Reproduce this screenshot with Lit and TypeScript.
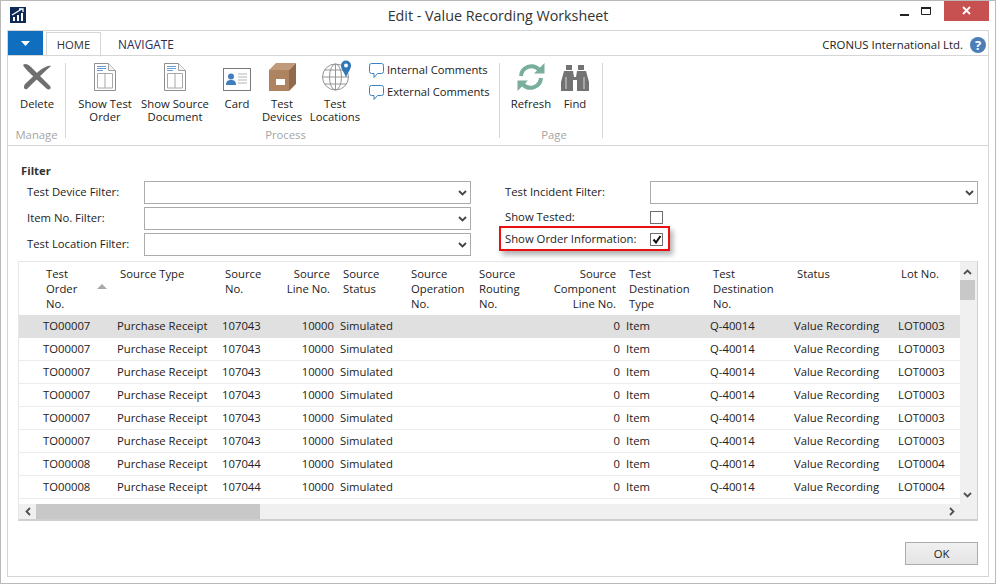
import { LitElement, html, css, svg } from "lit";
import { customElement } from "lit/decorators.js";

const chevron = html`<svg class="chev" width="9" height="6" viewBox="0 0 9 6"><path d="M1 1l3.5 3.5L8 1" fill="none" stroke="#444" stroke-width="1.8"/></svg>`;

const docIcon = html`<svg width="22" height="28" viewBox="0 0 22 28">
  <path d="M.5.5h14l7 7v20H.5z" fill="#fff" stroke="#8f8f8f"/>
  <path d="M14.5.5v7h7" fill="#f2f2f2" stroke="#a0a0a0"/>
  <path d="M3 3.500h9M3 5.500h9M3 7.500h6" stroke="#6b9bd0"/>
  <path d="M3.500 10.500h15v14.500h-15zM11 10.500v14.500" fill="none" stroke="#a8a8a8"/>
</svg>`;

const commentIcon = html`<svg width="15" height="16" viewBox="0 0 15 16">
  <path d="M2.500.5h10a2 2 0 0 1 2 2v6a2 2 0 0 1-2 2H8.500l-3.500 4v-4H2.500a2 2 0 0 1-2-2v-6a2 2 0 0 1 2-2z" fill="#fff" stroke="#3b80c2"/>
</svg>`;

const icons = {
  del: html`<svg width="30" height="28" viewBox="0 0 30 28" fill="#6f6f6f">
    <path d="M1 2C3 0 6 1 9 4l19 19c2 3-1 4-3 3L13 15C8 10 3 6 1 2z"/>
    <path d="M29 3c-2-1-7 1-12 5L3 21c-2 3-1 6 2 5C10 21 20 11 29 3z"/>
  </svg>`,
  card: html`<svg width="28" height="23" viewBox="0 0 28 23">
    <rect x=".5" y=".5" width="27" height="22" fill="#fff" stroke="#7a7a7a"/>
    <circle cx="8" cy="8.500" r="3" fill="#3f7fc1"/>
    <path d="M3 17c0-4 2-5 5-5s5 1 5 5z" fill="#3f7fc1"/>
    <path d="M15 6h9M15 9h9M15 12h9M15 15h9" stroke="#b5b5b5"/>
  </svg>`,
  box: html`<svg width="27" height="28" viewBox="0 0 27 28">
    <path d="M0 7l7-7h20l-7 7z" fill="#c09a79"/>
    <path d="M20 7l7-7v21l-7 7z" fill="#8f6a4b"/>
    <rect y="7" width="20" height="21" fill="#ad8360"/>
    <rect x="7" y="16" width="9" height="6" fill="#fff"/>
  </svg>`,
  globe: html`<svg width="30" height="31" viewBox="0 0 30 31" overflow="visible">
    <g fill="none" stroke="#959595">
      <circle cx="15.500" cy="17" r="13"/>
      <ellipse cx="15.500" cy="17" rx="6" ry="13"/>
      <path d="M15.500 4v26M2.500 17h26M4.500 10h22M4.500 24h22"/>
    </g>
    <path d="M26 .5a5 5 0 0 1 5 5c0 4-3.500 7-5 12-1.500-5-5-8-5-12a5 5 0 0 1 5-5z" fill="#2f77b8"/>
    <circle cx="26" cy="5.500" r="2" fill="#fff"/>
  </svg>`,
  refresh: html`<svg width="28" height="28" viewBox="0 0 28 28" fill="none">
    <path d="M4 13a10.500 10.500 0 0 1 18-6.500" stroke="#7aae9c" stroke-width="4"/>
    <path d="M17 10.500h10.500V0z" fill="#7aae9c"/>
    <path d="M24 15a10.500 10.500 0 0 1-18 6.500" stroke="#7aae9c" stroke-width="4"/>
    <path d="M11 17.500H.5V28z" fill="#7aae9c"/>
  </svg>`,
  find: html`<svg width="28" height="26" viewBox="0 0 28 26" fill="#737373">
    <path d="M5 0h6v5H5zM17 0h6v5h-6z"/>
    <path d="M3 6h9l1 6h2l1-6h9l3 11v9H16V15h-4v11H0v-9z"/>
    <path d="M5 12v12M23 12v12" stroke="#a5a5a5" stroke-width="2"/>
  </svg>`,
};

interface Row {
  order: string;
  no: string;
  lot: string;
}

const rows: Row[] = [
  { order: "TO00007", no: "107043", lot: "LOT0003" },
  { order: "TO00007", no: "107043", lot: "LOT0003" },
  { order: "TO00007", no: "107043", lot: "LOT0003" },
  { order: "TO00007", no: "107043", lot: "LOT0003" },
  { order: "TO00007", no: "107043", lot: "LOT0003" },
  { order: "TO00007", no: "107043", lot: "LOT0003" },
  { order: "TO00008", no: "107044", lot: "LOT0004" },
  { order: "TO00008", no: "107044", lot: "LOT0004" },
];

@customElement("app-root")
export class AppRoot extends LitElement {
  static styles = css`
    :host {
      display: block;
      width: 996px;
      height: 584px;
      font-family: "Open Sans", "Noto Sans", sans-serif;
      font-size: 11.3px;
      color: #222;
    }

    .window {
      box-sizing: border-box;
      width: 996px;
      height: 584px;
      border: 1px solid #b9b9b9;
      padding: 0 6px 6px;
      background: #fff;
      display: flex;
      flex-direction: column;
    }

    .titlebar {
      height: 29px;
      display: grid;
      grid-template-columns: 1fr auto 1fr;
      flex: none;
    }

    .logo {
      margin: 6px 0 0 3px;
    }

    .title {
      font-size: 14.3px;
      line-height: 29px;
      color: #333;
    }

    .controls {
      justify-self: end;
      display: flex;
      height: 20px;
    }

    .ctl {
      width: 22px;
      display: flex;
      justify-content: center;
      padding-top: 6px;
      box-sizing: border-box;
    }

    .close {
      width: 45px;
      background: #c75050;
      margin-left: 7px;
      padding-top: 5px;
    }

    .panel {
      flex: 1;
      border: 1px solid #d6d6d6;
      display: flex;
      flex-direction: column;
      min-height: 0;
    }

    .tabs {
      height: 24px;
      flex: none;
      display: flex;
      align-items: stretch;
      border-bottom: 1px solid #d6d6d6;
      position: relative;
    }

    .menu {
      width: 35px;
      height: 24px;
      background: #106ebe;
      display: flex;
      align-items: center;
      justify-content: center;
      margin-bottom: -1px;
    }

    .tab {
      line-height: 26px;
      text-align: center;
      color: #2b2b55;
      font-size: 11.8px;
    }

    .tab.active {
      width: 55px;
      margin-left: 3px;
      box-sizing: border-box;
      border: 1px solid #d6d6d6;
      border-bottom: 1px solid #fff;
      height: 25px;
      color: #333;
      margin-top: 1px;
      line-height: 24px;
      font-size: 11.3px;
    }

    .tab.nav {
      margin-left: 17px;
    }

    .company {
      margin-left: auto;
      display: flex;
      align-items: center;
      gap: 7px;
      padding-right: 2px;
      padding-top: 3px;
      height: 21px;
      font-size: 11.4px;
    }

    .help {
      width: 16px;
      height: 16px;
      border-radius: 50%;
      background: #4a7fb8;
      color: #fff;
      font-weight: 700;
      font-size: 13px;
      line-height: 16px;
      text-align: center;
    }

    .ribbon {
      height: 89px;
      flex: none;
      display: flex;
      border-bottom: 1px solid #d6d6d6;
    }

    .group {
      margin: 7px 0 7px;
      border-right: 1px solid #d6d6d6;
      display: flex;
      flex-direction: column;
      box-sizing: border-box;
    }

    .group.manage {
      width: 58px;
    }

    .group.process {
      width: 434px;
      padding-left: 6px;
    }

    .group.page {
      width: 103px;
      padding-left: 6px;
    }

    .buttons {
      flex: 1;
      display: flex;
    }

    .group-label {
      color: #a6a6a6;
      text-align: center;
      line-height: 14px;
      height: 14px;
      padding-top: 1px;
      margin-bottom: -4px;
    }

    .rbtn {
      display: flex;
      flex-direction: column;
      align-items: center;
      text-align: center;
      line-height: 13px;
    }

    .rbtn .ic {
      height: 32px;
      display: flex;
      align-items: flex-end;
      justify-content: center;
      margin-bottom: 6px;
      margin-top: -4px;
    }

    .w38 { width: 38px; }
    .w40 { width: 40px; }
    .w50 { width: 50px; }
    .w58 { width: 57px; padding-left: 1px; box-sizing: border-box; }
    .w66 { width: 66px; }
    .w74 { width: 74px; }

    .comments {
      display: flex;
      flex-direction: column;
      gap: 6px;
      margin-left: 1px;
    }

    .comment {
      display: flex;
      gap: 3px;
      height: 16px;
      line-height: 14px;
      font-size: 11.2px;
    }

    .filter {
      flex: none;
      padding: 17px 9px 0 13px;
    }

    .filter-title {
      font-weight: 700;
      line-height: 16px;
      height: 18px;
      color: #333;
    }

    .filter-grid {
      display: grid;
      grid-template-columns: 444px 473px;
      column-gap: 34px;
      padding-left: 6px;
    }

    .fcol {
      display: flex;
      flex-direction: column;
      gap: 3px;
    }

    .fcol.right {
      gap: 0;
    }

    .frow {
      height: 23px;
      display: flex;
      align-items: center;
      position: relative;
    }

    .right .frow {
      height: 22px;
    }

    .right .frow.first {
      height: 23px;
      margin-bottom: 2px;
    }

    .frow label {
      flex: none;
      margin-top: -2px;
    }

    .left label {
      width: 117px;
    }

    .right label {
      width: 145px;
    }

    .select {
      flex: 1;
      height: 23px;
      box-sizing: border-box;
      border: 1px solid #ababab;
      background: #fff;
      display: flex;
      align-items: center;
      justify-content: flex-end;
      padding-right: 3px;
    }

    .check {
      width: 13px;
      height: 13px;
      box-sizing: border-box;
      border: 1px solid #6f6f6f;
      background: #fff;
      display: flex;
      align-items: center;
      justify-content: center;
    }

    .highlight {
      position: absolute;
      left: -6px;
      top: -2px;
      width: 171px;
      height: 25px;
      box-sizing: border-box;
      border: 2px solid #e81010;
      box-shadow: 3px 4px 5px rgba(0, 0, 0, 0.3);
      pointer-events: none;
    }

    .table {
      margin-top: 5px;
      width: 960px;
      height: 260px;
      box-sizing: border-box;
      border: 1px solid #e6e6e6;
      border-right-color: #cfcfcf;
      border-bottom: 2px solid #cfcfcf;
      margin-left: 10px;
      display: flex;
      flex-direction: column;
      flex: none;
      background: #fff;
    }

    .table-main {
      flex: 1;
      display: flex;
      min-height: 0;
    }

    .rows {
      width: 942px;
      overflow: hidden;
    }

    .cols {
      display: grid;
      grid-template-columns: 21px 74px 105px 61px 57px 68px 68px 68px 82px 84px 84px 104px 66px;
    }

    .head {
      height: 53px;
      line-height: 15px;
      padding-top: 4px;
      box-sizing: border-box;
      position: relative;
    }

    .head div {
      padding-left: 6px;
    }

    .head .num {
      padding-left: 0;
      padding-right: 7px;
      text-align: right;
    }

    .sort {
      position: absolute;
      left: 78px;
      top: 22px;
    }

    .row {
      height: 23px;
      line-height: 22px;
      box-sizing: border-box;
      border-bottom: 1px solid #ececec;
      white-space: nowrap;
    }

    .row.sel {
      background: #e0e0e0;
      border-bottom-color: #e0e0e0;
    }

    .row div {
      padding-left: 3px;
    }

    .row .num {
      padding-left: 0;
      padding-right: 3px;
      text-align: right;
    }

    .vscroll {
      width: 17px;
      background: #f0f0f0;
      position: relative;
      flex: none;
    }

    .arrow {
      position: absolute;
      display: block;
    }

    .vthumb {
      position: absolute;
      left: 0;
      top: 18px;
      width: 15px;
      height: 20px;
      background: #c8c8c8;
    }

    .hscroll {
      height: 15px;
      flex: none;
      background: #f0f0f0;
      position: relative;
    }

    .hthumb {
      position: absolute;
      left: 17px;
      top: 0;
      width: 224px;
      height: 15px;
      background: #c8c8c8;
    }

    .footer {
      flex: 1;
      display: flex;
      justify-content: flex-end;
      align-items: flex-start;
      padding: 21px 10px 0 0;
    }

    .ok {
      width: 73px;
      height: 23px;
      box-sizing: border-box;
      border: 1px solid #acacac;
      background: linear-gradient(#f0f0f0, #e5e5e5);
      font: inherit;
      color: #222;
      padding: 0;
    }
  `;

  private renderRow(r: Row, i: number) {
    return html`<div class="cols row ${i === 0 ? "sel" : ""}">
      <div></div>
      <div>${r.order}</div>
      <div>Purchase Receipt</div>
      <div>${r.no}</div>
      <div class="num">10000</div>
      <div>Simulated</div>
      <div></div>
      <div></div>
      <div class="num">0</div>
      <div>Item</div>
      <div>Q-40014</div>
      <div>Value Recording</div>
      <div>${r.lot}</div>
    </div>`;
  }

  render() {
    return html`<div class="window">
      <div class="titlebar">
        <svg class="logo" width="16" height="16" viewBox="0 0 16 16">
          <rect width="16" height="16" fill="#0e2a56"/>
          <path d="M3 10h2v4H3zM7 8h2v6H7zM11 6h2v8h-2z" fill="#fff"/>
          ${svg`<path d="M2 8l9-5.500M9 2h4v3" fill="none" stroke="#fff" stroke-width="1.300"/>`}
        </svg>
        <div class="title">Edit - Value Recording Worksheet</div>
        <div class="controls">
          <div class="ctl"><svg width="9" height="10" viewBox="0 0 9 10"><rect y="7" width="9" height="2" fill="#222"/></svg></div>
          <div class="ctl"><svg width="10" height="8" viewBox="0 0 10 8"><path d="M.5 1.500h9v6h-9z" fill="none" stroke="#222"/><rect width="10" height="2" fill="#222"/></svg></div>
          <div class="ctl close"><svg width="9" height="9" viewBox="0 0 9 9"><path d="M1 1l7 7M8 1L1 8" stroke="#fff" stroke-width="1.800"/></svg></div>
        </div>
      </div>

      <div class="panel">
        <div class="tabs">
          <div class="menu"><svg width="9" height="5" viewBox="0 0 9 5"><path d="M0 0h9L4.500 5z" fill="#fff"/></svg></div>
          <div class="tab active">HOME</div>
          <div class="tab nav">NAVIGATE</div>
          <div class="company">CRONUS International Ltd. <div class="help">?</div></div>
        </div>

        <div class="ribbon">
          <div class="group manage">
            <div class="buttons">
              <div class="rbtn w58"><div class="ic">${icons.del}</div>Delete</div>
            </div>
            <div class="group-label">Manage</div>
          </div>
          <div class="group process">
            <div class="buttons">
              <div class="rbtn w66"><div class="ic">${docIcon}</div>Show Test<br />Order</div>
              <div class="rbtn w74"><div class="ic">${docIcon}</div>Show Source<br />Document</div>
              <div class="rbtn w50"><div class="ic">${icons.card}</div>Card</div>
              <div class="rbtn w40"><div class="ic">${icons.box}</div>Test<br />Devices</div>
              <div class="rbtn w66"><div class="ic">${icons.globe}</div>Test<br />Locations</div>
              <div class="comments">
                <div class="comment">${commentIcon}Internal Comments</div>
                <div class="comment">${commentIcon}External Comments</div>
              </div>
            </div>
            <div class="group-label">Process</div>
          </div>
          <div class="group page">
            <div class="buttons">
              <div class="rbtn w50"><div class="ic">${icons.refresh}</div>Refresh</div>
              <div class="rbtn w38"><div class="ic">${icons.find}</div>Find</div>
            </div>
            <div class="group-label">Page</div>
          </div>
        </div>

        <div class="filter">
          <div class="filter-title">Filter</div>
          <div class="filter-grid">
            <div class="fcol left">
              <div class="frow"><label>Test Device Filter:</label><div class="select">${chevron}</div></div>
              <div class="frow"><label>Item No. Filter:</label><div class="select">${chevron}</div></div>
              <div class="frow"><label>Test Location Filter:</label><div class="select">${chevron}</div></div>
            </div>
            <div class="fcol right">
              <div class="frow first"><label>Test Incident Filter:</label><div class="select">${chevron}</div></div>
              <div class="frow"><label>Show Tested:</label><div class="check"></div></div>
              <div class="frow">
                <label>Show Order Information:</label>
                <div class="check"><svg width="10" height="9" viewBox="0 0 10 9"><path d="M1.500 4.500l2.500 3L8.500 1" fill="none" stroke="#111" stroke-width="2"/></svg></div>
                <div class="highlight"></div>
              </div>
            </div>
          </div>
        </div>

        <div class="table">
          <div class="table-main">
            <div class="rows">
              <div class="cols head">
                <div></div>
                <div>Test<br />Order<br />No.</div>
                <div>Source Type</div>
                <div>Source<br />No.</div>
                <div class="num">Source<br />Line No.</div>
                <div>Source<br />Status</div>
                <div>Source<br />Operation<br />No.</div>
                <div>Source<br />Routing<br />No.</div>
                <div class="num">Source<br />Component<br />Line No.</div>
                <div>Test<br />Destination<br />Type</div>
                <div>Test<br />Destination<br />No.</div>
                <div>Status</div>
                <div>Lot No.</div>
                <svg class="sort" width="10" height="5" viewBox="0 0 10 5"><path d="M0 5L5 0l5 5z" fill="#a8a8a8"/></svg>
              </div>
              ${rows.map((r, i) => this.renderRow(r, i))}
            </div>
            <div class="vscroll">
              <svg class="arrow" style="left:3px;top:7px" width="9" height="6" viewBox="0 0 9 6"><path d="M1 5l3.500-3.500L8 5" fill="none" stroke="#505050" stroke-width="1.800"/></svg>
              <div class="vthumb"></div>
              <svg class="arrow" style="left:3px;top:230px" width="9" height="6" viewBox="0 0 9 6"><path d="M1 1l3.500 3.500L8 1" fill="none" stroke="#505050" stroke-width="1.800"/></svg>
            </div>
          </div>
          <div class="hscroll">
            <svg class="arrow" style="left:6px;top:3px" width="6" height="9" viewBox="0 0 6 9"><path d="M5 1L1.500 4.500 5 8" fill="none" stroke="#505050" stroke-width="1.800"/></svg>
            <div class="hthumb"></div>
            <svg class="arrow" style="left:930px;top:3px" width="6" height="9" viewBox="0 0 6 9"><path d="M1 1l3.500 3.500L1 8" fill="none" stroke="#505050" stroke-width="1.800"/></svg>
          </div>
        </div>

        <div class="footer"><button class="ok">OK</button></div>
      </div>
    </div>`;
  }
}
